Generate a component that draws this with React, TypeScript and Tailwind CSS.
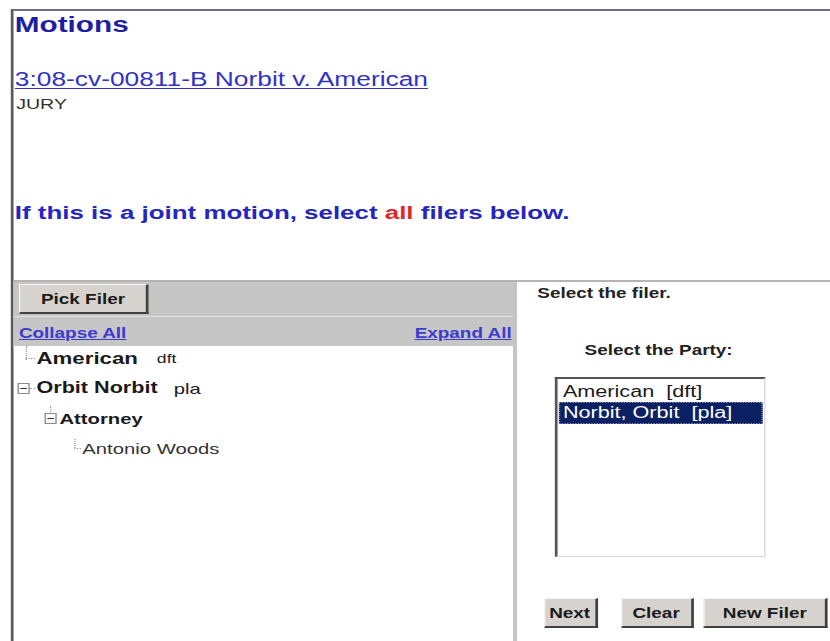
import React from "react";

const sans = { fontFamily: '"Liberation Sans", Arial, sans-serif' };

function MinusBox() {
  return (
    <span className="relative inline-flex h-[11px] w-[9px] shrink-0 items-center justify-center border border-[#8a8a8a] bg-white">
      <span className="block h-px w-[5px] bg-[#333]" />
    </span>
  );
}

function BevelButton({ label, w }: { label: string; w: string }) {
  return (
    <button
      className={`${w} h-[30px] border-t border-l border-t-[#f4f4f4] border-l-[#f4f4f4] border-r-2 border-b-2 border-r-[#404040] border-b-[#404040] bg-[#d6d3ce] text-[14px] font-bold text-[#1a1a1a] leading-none`}
    >
      {label}
    </button>
  );
}

export default function App() {
  return (
    <div className="h-[641px] w-[830px] overflow-hidden bg-white">
      <div
        className="h-[641px] w-[615px] origin-top-left scale-x-[1.35] pl-[8px] pt-[9px] text-[#222]"
        style={sans}
      >
        <div className="flex h-[632px] flex-col border-l-2 border-t-2 border-l-[#5a5a5a] border-t-[#6e6c8c]">
          {/* case header */}
          <div className="flex h-[269px] flex-col pl-[1px]">
            <h1 className="mt-[3px] text-[22px] font-bold leading-none text-[#1e1ea2]">Motions</h1>
            <a
              href="#"
              className="mt-[34px] self-start text-[19.5px] leading-none text-[#3232c4] underline decoration-1 underline-offset-2"
            >
              3:08-cv-00811-B Norbit v. American
            </a>
            <div className="ml-[1px] mt-[7px] text-[14.5px] leading-none text-[#333]">JURY</div>
            <p className="mt-[92px] text-[19.2px] font-bold leading-none text-[#2525c2]">
              If this is a joint motion, select <span className="text-[#e02626]">all</span> filers below.
            </p>
          </div>

          {/* party picker */}
          <div className="flex flex-1 border-t-2 border-t-[#b4b4b4]">
            <div className="flex w-[373px] flex-col border-r-[3px] border-r-[#c4c4c4]">
              <div className="bg-[#c6c6c6]">
                <div className="flex h-[35px] items-start border-b border-b-[#e2e2e2] pl-[4px] pt-[2px]">
                  <BevelButton label="Pick Filer" w="w-[96px]" />
                </div>
                <div className="flex h-[29px] items-center justify-between pl-[4px] pr-[1px] pt-[2px] text-[14px] font-bold leading-none">
                  <a href="#" className="text-[#3b3bd0] underline">Collapse All</a>
                  <a href="#" className="text-[#3b3bd0] underline">Expand All</a>
                </div>
              </div>

              <ul className="-mt-[3px] flex flex-col text-[16px] leading-none text-[#1a1a1a]">
                <li className="relative flex h-[30px] items-center pl-[9px]">
                  <span className="absolute left-[9px] top-[3px] h-[14px] border-l border-dotted border-l-[#999]" />
                  <span className="mr-[1px] w-[7px] border-t border-dotted border-t-[#999]" />
                  <span className="text-[16.5px] font-bold">American</span>
                  <span className="ml-[14px] text-[13px] font-normal">dft</span>
                </li>
                <li className="flex h-[30px] items-center pl-[3px]">
                  <MinusBox />
                  <span className="w-[4px] border-t border-dotted border-t-[#999]" />
                  <span className="ml-[1px] font-bold">Orbit Norbit</span>
                  <span className="ml-[12px] text-[15px] font-normal">pla</span>
                </li>
                <li className="relative flex h-[30px] items-center pl-[23px]">
                  <span className="absolute left-[27px] top-[3px] h-[6px] border-l border-dotted border-l-[#999]" />
                  <MinusBox />
                  <span className="ml-[2px] text-[15px] font-bold">Attorney</span>
                </li>
                <li className="relative flex h-[30px] items-center pl-[45px]">
                  <span className="absolute left-[45px] top-[6px] h-[9px] border-l border-dotted border-l-[#999]" />
                  <span className="w-[5px] self-center border-t border-dotted border-t-[#999]" />
                  <span className="ml-[1px] text-[15px] font-normal text-[#333]">Antonio Woods</span>
                </li>
              </ul>
            </div>

            <div className="flex flex-1 flex-col">
              <div className="ml-[15px] mt-[4px] text-[14px] font-bold leading-none text-[#222]">
                Select the filer.
              </div>
              <div className="ml-[50px] mt-[43px] text-[14px] font-bold leading-none text-[#222]">
                Select the Party:
              </div>
              <div className="ml-[28px] mt-[20px] flex h-[180px] w-[156px] flex-col border-l-2 border-t-2 border-b border-r border-l-[#555] border-t-[#555] border-b-[#d8d8d8] border-r-[#d8d8d8] bg-white px-[1px] pt-[2px] text-[16px] leading-none">
                <div className="flex h-[21px] items-center pl-[3px] text-[#1a1a1a]">American&nbsp;&nbsp;[dft]</div>
                <div className="flex h-[22px] items-center border border-dotted border-[#8a8ab0] bg-[#0c2164] pl-[2px] text-white">
                  Norbit, Orbit&nbsp;&nbsp;[pla]
                </div>
              </div>
              <div className="ml-[19.5px] mt-[41px] flex">
                <BevelButton label="Next" w="w-[40px]" />
                <div className="ml-[17px] flex gap-[7.5px]">
                  <BevelButton label="Clear" w="w-[54px]" />
                  <BevelButton label="New Filer" w="w-[92px]" />
                </div>
              </div>
            </div>
          </div>
        </div>
      </div>
    </div>
  );
}
